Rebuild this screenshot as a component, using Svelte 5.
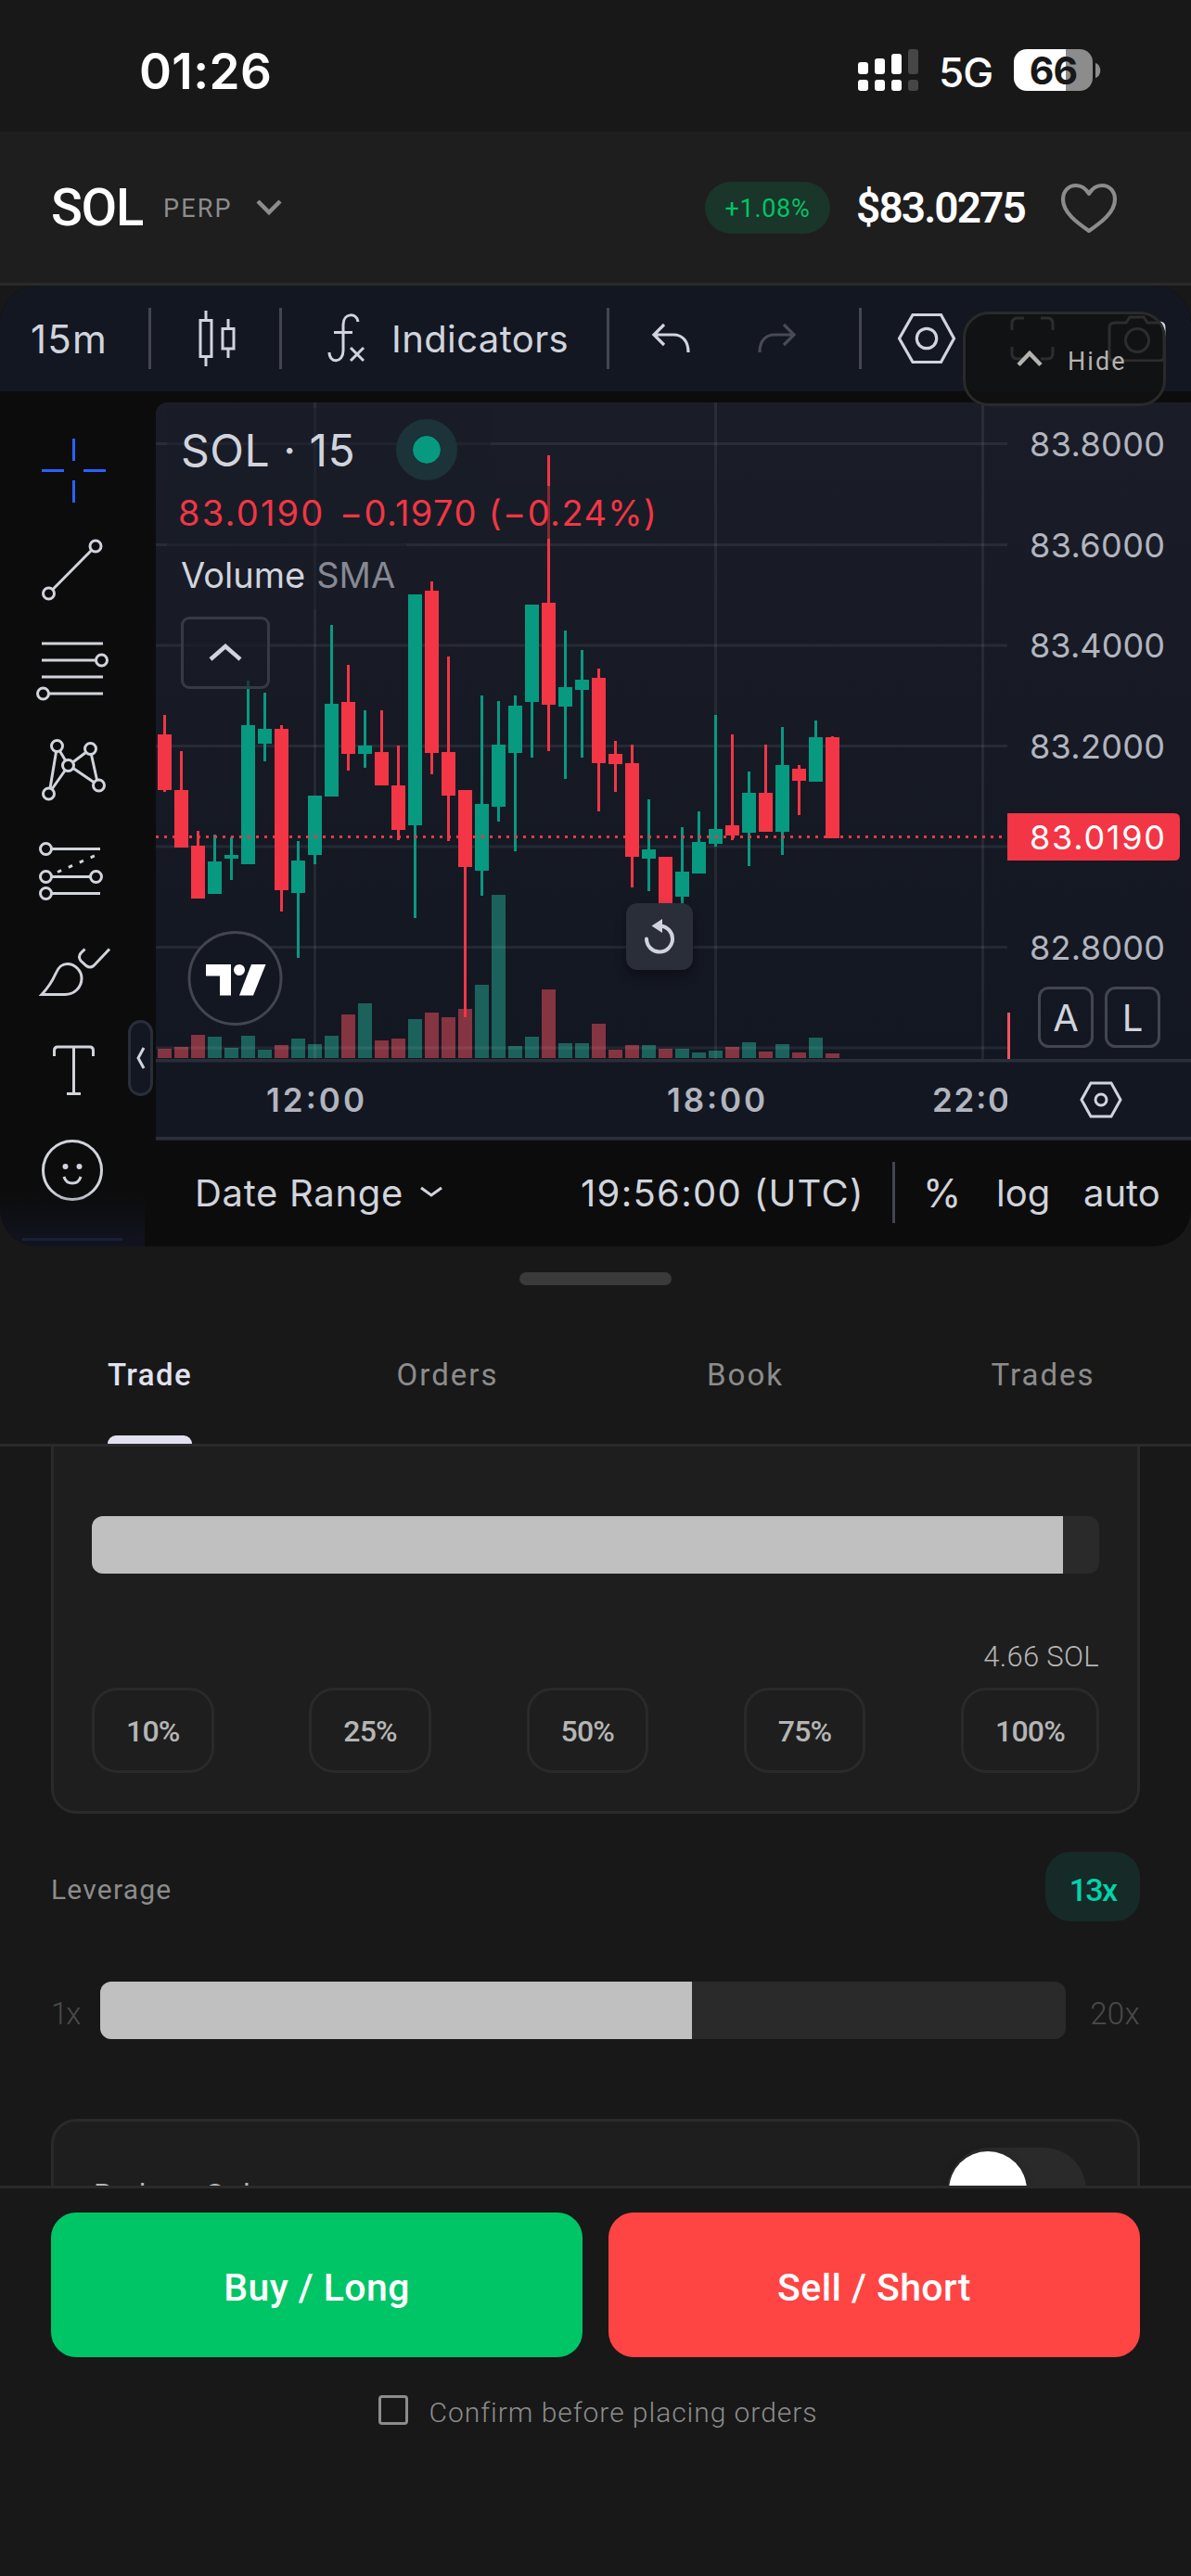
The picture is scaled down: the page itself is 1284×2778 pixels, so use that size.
<script>
  // Candle: [up, wick top, body top, body bottom, wick bottom, volume top]
  const candles = [
    [0, 771, 792, 852, 854, 1131],
    [0, 810, 852, 914, 914, 1129],
    [0, 896, 912, 969, 969, 1116],
    [1, 900, 929, 964, 964, 1118],
    [1, 903, 922, 926, 949, 1130],
    [1, 734, 782, 932, 932, 1117],
    [1, 747, 786, 802, 821, 1132],
    [0, 782, 786, 960, 983, 1127],
    [1, 907, 928, 963, 1033, 1120],
    [1, 858, 858, 922, 932, 1126],
    [1, 674, 759, 859, 859, 1117],
    [0, 717, 757, 813, 831, 1094],
    [1, 766, 804, 813, 828, 1082],
    [0, 766, 811, 847, 847, 1122],
    [0, 804, 847, 895, 906, 1120],
    [1, 641, 641, 890, 990, 1099],
    [0, 627, 637, 812, 835, 1092],
    [0, 708, 811, 858, 907, 1097],
    [0, 852, 852, 935, 1097, 1088],
    [1, 750, 867, 939, 966, 1062],
    [1, 756, 803, 870, 886, 965],
    [1, 750, 761, 812, 918, 1128],
    [1, 652, 652, 757, 817, 1118],
    [0, 491, 650, 760, 810, 1067],
    [1, 680, 741, 762, 840, 1125],
    [1, 701, 733, 744, 817, 1125],
    [0, 721, 731, 823, 875, 1104],
    [0, 799, 813, 824, 854, 1132],
    [0, 803, 823, 924, 957, 1127],
    [1, 862, 916, 926, 961, 1127],
    [0, 924, 924, 985, 985, 1131],
    [1, 892, 940, 967, 985, 1131],
    [1, 875, 908, 942, 942, 1135],
    [1, 771, 894, 910, 913, 1133],
    [0, 792, 890, 901, 906, 1129],
    [1, 832, 855, 898, 934, 1124],
    [0, 803, 855, 897, 897, 1134],
    [1, 784, 825, 897, 922, 1126],
    [0, 825, 829, 842, 879, 1135],
    [1, 777, 795, 843, 843, 1119],
    [0, 794, 795, 904, 904, 1136]
  ].map(([up, high, top, bottom, low, vol], i) => ({
    x: 170 + i * 18,
    color: up ? '#089981' : '#f23645',
    volColor: up ? '#1c625c' : '#853441',
    high, top, bottom, low, vol
  }));

  const gridRows = [478.5, 587.5, 696, 804.5, 913, 1021.5, 1130];
  const gridCols = [339.5, 771.5, 1059.5];

  const priceLabels = [
    { text: '83.8000', y: 478.5 },
    { text: '83.6000', y: 587.5 },
    { text: '83.4000', y: 696 },
    { text: '83.2000', y: 804.5 },
    { text: '82.8000', y: 1021.5 }
  ];

  const tabs = ['Trade', 'Orders', 'Book', 'Trades'];
  const percents = ['10%', '25%', '50%', '75%', '100%'];

  let activeTab = 'Trade';
  let sizeFill = 96.4;
  let leverage = 13;
  let leverageFill = 61.3;
  let confirmOrders = false;
</script>

<div class="screen">
  <div class="status-bar">
    <span class="time">01:26</span>
    <div class="status-right">
      <svg class="signal" width="65" height="45" viewBox="0 0 65 45">
        <g fill="#fff">
          <rect x="0" y="14" width="11" height="13" rx="3" />
          <rect x="18" y="10" width="11" height="17" rx="3" />
          <rect x="36" y="5" width="11" height="22" rx="3" />
          <rect x="0" y="33" width="11" height="12" rx="3" />
          <rect x="18" y="33" width="11" height="12" rx="3" />
          <rect x="36" y="33" width="11" height="12" rx="3" />
        </g>
        <rect x="54" y="0" width="11" height="27" rx="3" fill="#464646" />
        <rect x="54" y="33" width="11" height="12" rx="3" fill="#464646" />
      </svg>
      <span class="network">5G</span>
      <div class="battery">66</div>
      <svg width="6" height="16" viewBox="0 0 6 16"><path d="M0 0C7 2 7 14 0 16z" fill="#8c8c8c" /></svg>
    </div>
  </div>

  <header class="market">
    <span class="symbol">SOL</span>
    <span class="kind">PERP</span>
    <svg class="market-chevron" width="30" height="20" viewBox="0 0 30 20">
      <path d="M3 3l12 12 12-12" fill="none" stroke="#8c8c8c" stroke-width="4.5" />
    </svg>
    <span class="change">+1.08%</span>
    <span class="price">$83.0275</span>
    <svg class="heart" width="62" height="56" viewBox="0 0 62 56">
      <path
        d="M31 53C18 44 3 33 3 19C3 10 9 4 17 4C24 4 28 8 31 13C34 8 38 4 45 4C53 4 59 10 59 19C59 33 44 44 31 53z"
        fill="none" stroke="#8c8c8c" stroke-width="4.2" stroke-linejoin="round"
      />
    </svg>
  </header>

  <section class="widget">
    <div class="toolbar">
      <span class="interval">15m</span>
      <span class="sep"></span>
      <svg class="icon-candles" width="42" height="62" viewBox="0 0 42 62" fill="none" stroke="#d1d4dc" stroke-width="3">
        <path d="M3 11.5h12v39H3zM9 1v10M9 51v10M27 20.500h12v21.500H27zM33 10v10M33 42v10" />
      </svg>
      <span class="sep"></span>
      <svg class="icon-fx" width="42" height="54" viewBox="0 0 42 54" fill="none" stroke="#d1d4dc" stroke-width="3">
        <path d="M33 9C32 -1 17 -1 17 12V40C17 54 2 54 2 42M7 20.500h20M25 37l14 14M39 37L25 51" />
      </svg>
      <span class="indicators">Indicators</span>
      <span class="sep"></span>
      <svg class="icon-undo" width="42" height="34" viewBox="0 0 42 34" fill="none" stroke="#d1d4dc" stroke-width="3.200">
        <path d="M14 2L3 13l11 11M3 13H24C34 13 40 20 40 32" />
      </svg>
      <svg class="icon-redo" width="42" height="34" viewBox="0 0 42 34" fill="none" stroke="#484a55" stroke-width="3.200">
        <path d="M28 2l11 11-11 11M39 13H18C8 13 2 20 2 32" />
      </svg>
      <span class="sep"></span>
      <svg class="icon-gear" width="64" height="56" viewBox="0 0 64 56" fill="none" stroke="#d1d4dc" stroke-width="3.200">
        <path d="M2.500 28L17 2.500H47.500L61.500 28L47.500 53.500H17z" />
        <circle cx="32" cy="28" r="10.700" />
      </svg>
      <svg class="icon-full" width="48" height="48" viewBox="0 0 48 48" fill="none" stroke="#d1d4dc" stroke-width="3">
        <path d="M2 15V8Q2 2 8 2h7M33 2h7q6 0 6 6v7M46 33v7q0 6-6 6h-7M15 46H8q-6 0-6-6v-7" />
      </svg>
      <svg class="icon-camera" width="64" height="50" viewBox="0 0 64 50" fill="none" stroke="#d1d4dc" stroke-width="3">
        <path d="M8 8H20L24 2H39L43 8H56Q61 8 61 13V44Q61 49 56 49H7Q2 49 2 44V13Q2 8 8 8z" />
        <circle cx="32" cy="27" r="12.500" />
      </svg>
    </div>

    <button class="hide" type="button">
      <svg width="28" height="18" viewBox="0 0 28 18"><path d="M2 15.500L14 3l12 12.500" fill="none" stroke="#b5b3b0" stroke-width="4.500" /></svg>
      <span>Hide</span>
    </button>

    <div class="workspace">
      <aside class="tools">
        <svg viewBox="0 0 168 108" class="active">
          <path d="M79.500 19v24M79.500 64v24M45 53.500h24M90 53.500h24" />
        </svg>
        <svg viewBox="0 0 168 108">
          <circle cx="103" cy="27" r="6" /><circle cx="52.500" cy="78" r="6" />
          <path d="M57 73.500L98.500 31.500" />
        </svg>
        <svg viewBox="0 0 168 108">
          <path d="M45 24h66M45 42h58M45 60h66M52.500 78H111" />
          <circle cx="109.500" cy="42" r="6" /><circle cx="46.500" cy="78" r="6" />
        </svg>
        <svg viewBox="0 0 168 108">
          <circle cx="61.500" cy="26.500" r="6" /><circle cx="97.500" cy="29.500" r="6" />
          <circle cx="73.500" cy="47.500" r="6" /><circle cx="52.500" cy="78" r="6" />
          <circle cx="106.500" cy="69" r="6" />
          <path d="M60.500 33L54 72M64.500 32l6 10M56 73l14-20M78.500 44l14-10.500M79 50.500l22 15M98.500 36l6 27" />
        </svg>
        <svg viewBox="0 0 168 108">
          <circle cx="49.500" cy="29.500" r="6" /><circle cx="49.500" cy="59.500" r="6" />
          <circle cx="103.500" cy="59.500" r="6" /><circle cx="49.500" cy="77.500" r="6" />
          <path d="M56 29.500h52M56 59.500h41M56 77.500h52" />
          <path d="M62 54.500L104 36" stroke-dasharray="4.500 8.500" />
        </svg>
        <svg viewBox="0 0 168 108">
          <path d="M45 78.500C51 72 56 65 60 56C64 47 68 45.500 72.500 45.500C81 45.500 88 53 88 61C88 71 80 78.500 70 78.500z" />
          <path d="M91.500 29.500L87 34Q84 38 87 42L93 47.500Q97 50.500 101 47.500L118 29.500" />
        </svg>
        <svg viewBox="0 0 168 108">
          <path d="M58.500 37V31Q58.500 27 62 27H97Q100.500 27 100.500 31V37M79.500 27V77.500M72 77.500h15" />
        </svg>
        <svg viewBox="0 0 168 108">
          <circle cx="78" cy="52" r="31.500" />
          <circle cx="70.500" cy="48" r="3" class="solid" /><circle cx="85.500" cy="48" r="3" class="solid" />
          <path d="M69 59Q71 66 78 66Q85 66 87 59" />
        </svg>
        <div class="tools-fade"></div>
        <button class="collapse" type="button" aria-label="Collapse">
          <svg width="10" height="24" viewBox="0 0 10 24"><path d="M8 1L2 12l6 11" fill="none" stroke="#d1d4dc" stroke-width="3" /></svg>
        </button>
      </aside>

      <div class="chart">
        <svg class="plot" width="1116" height="796" viewBox="168 434 1116 796">
          <defs>
            <linearGradient id="pane" x1="0" y1="0" x2="0" y2="1">
              <stop offset="0" stop-color="#1a1d28" />
              <stop offset="1" stop-color="#131722" />
            </linearGradient>
            <clipPath id="time-clip"><rect x="168" y="1146" width="918" height="80" /></clipPath>
          </defs>
          <rect x="168" y="434" width="1116" height="708" fill="url(#pane)" />
          <rect x="168" y="1142" width="1116" height="88" fill="#131722" />

          {#each candles as c}
            <rect x={c.x} y={c.vol} width="15" height={1141 - c.vol} fill={c.volColor} />
          {/each}
          <g fill="#f0f3fa" fill-opacity="0.075">
            {#each gridRows as y}
              <rect x="168" y={y - 1.5} width="918" height="3" />
            {/each}
            {#each gridCols as x}
              <rect x={x - 1.5} y="434" width="3" height="708" />
            {/each}
          </g>
          {#each candles as c}
            <rect x={c.x + 6} y={c.high} width="3" height={c.low - c.high} fill={c.color} />
            <rect x={c.x} y={c.top} width="15" height={c.bottom - c.top} fill={c.color} />
          {/each}

          <path d="M168 902.500H1086" stroke="#f23645" stroke-width="3" stroke-dasharray="3 6" />
          <rect x="1086" y="1092" width="3" height="50" fill="#f7525f" />

          <g font-size="36" fill="#b2b5be">
            {#each priceLabels as label}
              <text x="1110" y={label.y + 13} textLength="146">{label.text}</text>
            {/each}
          </g>
          <path d="M1086 877H1266Q1272 877 1272 883V922Q1272 928 1266 928H1086z" fill="#f23645" />
          <text x="1110" y="916" font-size="36" fill="#fff" textLength="146">83.0190</text>

          <g fill="none" stroke="#434651" stroke-width="3">
            <rect x="1120.500" y="1065.500" width="57" height="63" rx="10" />
            <rect x="1192.500" y="1065.500" width="57" height="63" rx="10" />
          </g>
          <g font-size="40" fill="#d1d4dc" text-anchor="middle">
            <text x="1149" y="1112">A</text>
            <text x="1221" y="1112">L</text>
          </g>

          <rect x="168" y="1142" width="1116" height="3.500" fill="#2a2e39" />
          <g font-size="35" font-weight="600" fill="#b2b5be" clip-path="url(#time-clip)">
            <text x="287" y="1199" textLength="106">12:00</text>
            <text x="719" y="1199" textLength="106">18:00</text>
            <text x="1005" y="1199" textLength="108">22:00</text>
          </g>
          <g fill="none" stroke="#d1d4dc" stroke-width="3">
            <path d="M1166 1186L1176 1168H1198L1208 1186L1198 1204H1176z" />
            <circle cx="1187" cy="1186" r="6" />
          </g>
          <rect x="168" y="1226" width="1116" height="3.500" fill="#2a2e39" />

          <circle cx="253.500" cy="1055" r="49.500" fill="#131722" stroke="#434651" stroke-width="3" />
          <g fill="#fff">
            <path d="M222 1040h27v33.500H237V1052.500H222z" />
            <circle cx="258" cy="1046" r="6" />
            <path d="M271 1040h15.500L273 1073.500H258z" />
          </g>
        </svg>

        <div class="legend">
          <div class="legend-title">
            <span>SOL · 15</span>
            <i class="live"></i>
          </div>
          <div class="legend-values"><span class="last">83.0190</span><span class="diff">−0.1970 (−0.24%)</span></div>
          <div class="legend-study"><span>Volume</span> <span class="muted">SMA</span></div>
          <button class="legend-toggle" type="button" aria-label="Toggle legend">
            <svg width="38" height="20" viewBox="0 0 38 20"><path d="M3 17L19 3l16 14" fill="none" stroke="#d1d4dc" stroke-width="4.500" /></svg>
          </button>
        </div>

        <button class="reset" type="button" aria-label="Reset chart">
          <svg width="40" height="44" viewBox="0 0 40 44">
            <path d="M6 24.500A14 14 0 1 0 21 10.500" fill="none" stroke="#d1d4dc" stroke-width="4" stroke-linecap="round" />
            <path d="M23 3v15L11.500 10.500z" fill="#d1d4dc" />
          </svg>
        </button>

        <div class="chart-footer">
          <span class="range">Date Range</span>
          <svg width="26" height="14" viewBox="0 0 26 14"><path d="M2 2l11 8 11-8" fill="none" stroke="#d1d4dc" stroke-width="3" /></svg>
          <span class="clock">19:56:00 (UTC)</span>
          <span class="sep"></span>
          <span class="opt-percent">%</span>
          <span class="opt-log">log</span>
          <span class="opt-auto">auto</span>
        </div>
      </div>
    </div>
  </section>

  <div class="handle"></div>

  <nav class="tabs">
    {#each tabs as tab}
      <button type="button" class:active={activeTab === tab} on:click={() => (activeTab = tab)}>
        <span>{tab}</span>
      </button>
    {/each}
  </nav>

  <main class="form">
    <div class="card size-card">
      <div class="slider"><div class="fill" style="width: {sizeFill}%"></div></div>
      <div class="size">4.66 SOL</div>
      <div class="percents">
        {#each percents as p}
          <button type="button">{p}</button>
        {/each}
      </div>
    </div>

    <div class="leverage-head">
      <span>Leverage</span>
      <span class="badge">{leverage}x</span>
    </div>
    <div class="leverage-row">
      <span class="min">1x</span>
      <div class="slider"><div class="fill" style="width: {leverageFill}%"></div></div>
      <span class="max">20x</span>
    </div>

    <div class="card option-card">
      <span>Reduce Only</span>
      <div class="switch"><div class="knob"></div></div>
    </div>
  </main>

  <footer class="actions">
    <div class="action-buttons">
      <button type="button" class="buy">Buy / Long</button>
      <button type="button" class="sell">Sell / Short</button>
    </div>
    <div class="confirm">
      <span class="checkbox" class:checked={confirmOrders}></span>
      <span>Confirm before placing orders</span>
    </div>
  </footer>
</div>

<style>
  :global(body) {
    background: #181818;
  }

  .screen {
    width: 1284px;
    height: 2778px;
    overflow: hidden;
    display: flex;
    flex-direction: column;
    background: #181818;
    color: #fff;
    font-family: Roboto, sans-serif;
  }

  .screen > * {
    flex-shrink: 0;
    box-sizing: border-box;
  }

  button {
    margin: 0;
    padding: 0;
    border: none;
    background: none;
    color: inherit;
    font: inherit;
    box-sizing: border-box;
  }

  svg {
    display: block;
    flex-shrink: 0;
  }

  /* status bar */
  .status-bar {
    height: 142px;
    padding: 0 97px 0 150px;
    display: flex;
    justify-content: space-between;
    align-items: center;
    font-family: Inter, sans-serif;
  }

  .time {
    font-size: 53px;
    font-weight: 600;
    letter-spacing: 0.4px;
    margin-top: 12px;
  }

  .status-right {
    display: flex;
    align-items: center;
    margin-top: 9px;
  }

  .network {
    font-size: 44px;
    font-weight: 500;
    margin-left: 22px;
    width: 81px;
    letter-spacing: -1px;
    padding-top: 4px;
  }

  .battery {
    width: 85px;
    height: 45px;
    line-height: 46px;
    border-radius: 14px;
    background: linear-gradient(to right, #fff 66%, #8c8c8c 66%);
    color: #181818;
    font-size: 41px;
    font-weight: 700;
    letter-spacing: -1px;
    text-align: center;
    margin-right: 3px;
  }

  /* market header */
  .market {
    height: 166px;
    padding: 0 79px 0 55px;
    display: flex;
    align-items: center;
    background: #1e1e1e;
    border-bottom: 3px solid #2a2a2a;
  }

  .symbol {
    font-size: 56px;
    font-weight: 500;
    letter-spacing: -1.3px;
    width: 121px;
  }

  .kind {
    font-size: 27px;
    color: #8c8c8c;
    letter-spacing: 2.2px;
    margin-top: 3px;
    width: 99px;
  }

  .change {
    margin-left: auto;
    width: 135px;
    height: 56px;
    line-height: 59px;
    border-radius: 28px;
    text-align: center;
    background: #1a3529;
    color: #00c566;
    font-size: 27px;
    letter-spacing: 0.7px;
  }

  .price {
    margin-left: 28px;
    width: 220px;
    font-size: 46px;
    font-weight: 600;
    letter-spacing: -1.9px;
  }

  /* chart widget */
  .widget {
    position: relative;
    height: 1036px;
    border-radius: 40px;
    overflow: hidden;
    background: #0c0c0c;
    font-family: Inter, sans-serif;
    color: #d1d4dc;
  }

  .toolbar {
    height: 114px;
    display: flex;
    align-items: center;
    background: #131722;
    font-size: 40px;
  }

  .sep {
    width: 3px;
    height: 66px;
    background: #434651;
    flex-shrink: 0;
  }

  .interval {
    width: 127px;
    padding-left: 33px;
    font-size: 42px;
    letter-spacing: 1.2px;
  }

  .icon-candles {
    margin: 0 46px 0 50px;
  }

  .icon-fx {
    margin: 0 27px 0 49px;
  }

  .indicators {
    width: 232px;
    white-space: nowrap;
    letter-spacing: 0.4px;
  }

  .icon-undo {
    margin: 0 73px 0 45px;
  }

  .icon-redo {
    margin-right: 67px;
  }

  .icon-gear {
    margin: 0 58px 0 38px;
  }

  .icon-camera {
    margin-left: 57px;
    margin-top: -1px;
  }

  .hide {
    position: absolute;
    top: 28px;
    left: 1038px;
    width: 219px;
    height: 102px;
    padding: 0 0 0 55px;
    display: flex;
    align-items: center;
    gap: 27px;
    border: 3px solid #2a2a2a;
    border-radius: 28px;
    background: rgba(17, 17, 17, 0.86);
    color: #b5b3b0;
    font-family: Roboto, sans-serif;
    font-size: 27px;
    letter-spacing: 2.1px;
    z-index: 2;
  }

  .hide span {
    padding-top: 6px;
  }

  .workspace {
    display: flex;
    height: 922px;
  }

  .tools {
    position: relative;
    width: 168px;
    padding-top: 32px;
    box-sizing: border-box;
    flex-shrink: 0;
  }

  .tools > svg {
    width: 168px;
    height: 108px;
    fill: none;
    stroke: #d1d4dc;
    stroke-width: 3;
  }

  .tools > svg.active {
    stroke: #2962ff;
  }

  .tools .solid {
    fill: #d1d4dc;
    stroke: none;
  }

  .tools-fade {
    position: absolute;
    left: 0;
    bottom: 0;
    width: 156px;
    height: 60px;
    background:
      linear-gradient(#1b2036, #1b2036) 24px 51px / 108px 3px no-repeat,
      linear-gradient(to bottom, rgba(19, 23, 34, 0), #111420);
  }

  .collapse {
    position: absolute;
    left: 138px;
    top: 678px;
    width: 27px;
    height: 82px;
    display: flex;
    align-items: center;
    justify-content: center;
    border: 3px solid #2a2e39;
    border-radius: 14px;
    background: #131722;
  }

  .chart {
    position: relative;
    width: 1116px;
    padding-top: 12px;
  }

  .plot {
    border-top-left-radius: 12px;
  }

  .legend {
    position: absolute;
    left: 12px;
    top: 18px;
    display: flex;
    flex-direction: column;
    align-items: flex-start;
    white-space: nowrap;
  }

  .legend-title,
  .legend-values,
  .legend-study {
    display: flex;
    align-items: center;
    box-sizing: border-box;
    background: rgba(24, 27, 38, 0.5);
  }

  .legend-title {
    width: 349px;
    height: 84px;
    padding: 6px 0 0 15px;
    font-size: 48px;
    letter-spacing: 0.5px;
  }

  .legend-title span {
    width: 232px;
  }

  .live {
    width: 30px;
    height: 30px;
    border-radius: 50%;
    background: #089981;
    border: 18px solid #1b3339;
    background-clip: padding-box;
  }

  .legend-values {
    height: 57px;
    padding: 0 12px;
    font-size: 38px;
    color: #f23645;
  }

  .last {
    width: 174px;
    letter-spacing: 2.2px;
  }

  .diff {
    letter-spacing: 1.4px;
  }

  .legend-study {
    width: 258px;
    height: 76px;
    padding: 2px 0 0 15px;
    font-size: 38px;
    gap: 12px;
  }

  .muted {
    color: #868993;
  }

  .legend-toggle {
    width: 96px;
    height: 78px;
    margin: 8px 0 0 15px;
    display: flex;
    align-items: center;
    justify-content: center;
    border: 3px solid #363a45;
    border-radius: 9px;
    background: rgba(24, 27, 38, 0.7);
  }

  .reset {
    position: absolute;
    left: 507px;
    top: 552px;
    width: 72px;
    height: 72px;
    display: flex;
    align-items: center;
    justify-content: center;
    border-radius: 12px;
    background: #2a2e39;
    box-shadow: 0 6px 12px rgba(0, 0, 0, 0.4);
  }

  .chart-footer {
    height: 112px;
    display: flex;
    align-items: center;
    padding-left: 42px;
    font-size: 40px;
    white-space: nowrap;
  }

  .range {
    width: 242px;
    letter-spacing: 0.7px;
  }

  .clock {
    margin-left: 148px;
    width: 336px;
    letter-spacing: 1.3px;
  }

  .opt-percent {
    margin-left: 30px;
    width: 79px;
    font-size: 42px;
  }

  .opt-log {
    width: 94px;
  }

  /* bottom sheet */
  .handle {
    width: 164px;
    height: 14px;
    margin: 28px auto 0;
    border-radius: 7px;
    background: #3a3a3a;
  }

  .tabs {
    height: 174px;
    display: grid;
    grid-template-columns: repeat(4, 1fr);
    border-bottom: 3px solid #2a2a2a;
  }

  .tabs button {
    display: flex;
    justify-content: center;
    font-size: 33px;
    letter-spacing: 2px;
    color: #8c8c8c;
  }

  .tabs span {
    height: 171px;
    padding: 77px 0 0 2px;
    display: flex;
    flex-direction: column;
    justify-content: space-between;
    box-sizing: border-box;
  }

  .tabs span::after {
    content: '';
    height: 9px;
  }

  .tabs .active {
    color: #e1e1f0;
    font-weight: 500;
    letter-spacing: 1.4px;
  }

  .tabs .active span::after {
    background: #e1e1f0;
    border-radius: 9px 9px 0 0;
  }

  .form {
    height: 797px;
    padding: 0 55px;
    overflow: hidden;
  }

  .card {
    box-sizing: border-box;
    border: 3px solid #2a2a2a;
    border-radius: 27px;
    background: #1e1e1e;
  }

  .size-card {
    height: 396px;
    padding: 75px 41px 0;
    border-top: none;
    border-radius: 0 0 27px 27px;
  }

  .slider {
    height: 62px;
    border-radius: 12px;
    overflow: hidden;
    background: #2a2a2a;
  }

  .fill {
    height: 100%;
    background: #c0c0c0;
  }

  .size {
    margin-top: 70px;
    height: 53px;
    line-height: 40px;
    text-align: right;
    font-size: 31px;
    font-weight: 300;
    color: #b5b5b5;
    letter-spacing: 0.3px;
  }

  .percents {
    display: flex;
    justify-content: space-between;
  }

  .percents button {
    height: 92px;
    padding: 2px 34px 0;
    border: 3px solid #2a2a2a;
    border-radius: 27px;
    font-size: 32px;
    font-weight: 500;
    color: #b5b5b5;
    letter-spacing: -0.8px;
  }

  .leverage-head {
    margin-top: 41px;
    height: 75px;
    display: flex;
    align-items: center;
    justify-content: space-between;
    font-size: 30px;
    color: #8c8c8c;
    letter-spacing: 1.2px;
  }

  .leverage-head span:first-child {
    padding-top: 5px;
  }

  .badge {
    width: 102px;
    height: 75px;
    line-height: 82px;
    border-radius: 27px;
    background: #162a28;
    color: #00d4aa;
    text-align: center;
    font-size: 34px;
    font-weight: 500;
    letter-spacing: -1.7px;
  }

  .leverage-row {
    margin-top: 65px;
    height: 62px;
    display: flex;
    align-items: center;
    font-size: 33px;
    font-weight: 300;
    color: #4a4a4a;
  }

  .leverage-row span {
    padding-top: 6px;
  }

  .leverage-row .slider {
    width: 1041px;
  }

  .min {
    width: 53px;
    letter-spacing: -2px;
  }

  .max {
    margin-left: auto;
    letter-spacing: 0.4px;
  }

  .option-card {
    margin-top: 86px;
    height: 160px;
    padding: 28px 55px 0 43px;
    display: flex;
    align-items: flex-start;
    justify-content: space-between;
    font-size: 32px;
    letter-spacing: 0.8px;
    color: #b5b5b5;
  }

  .option-card span {
    padding-top: 31px;
  }

  .switch {
    width: 150px;
    height: 92px;
    padding: 4px 2px;
    border-radius: 46px;
    background: #2a2a2a;
    box-sizing: border-box;
  }

  .knob {
    width: 84px;
    height: 84px;
    border-radius: 50%;
    background: #fff;
    box-shadow: 0 3px 12px rgba(0, 0, 0, 0.2);
  }

  .actions {
    flex: 1;
    padding: 26px 55px 0;
    border-top: 3px solid #2a2a2a;
    background: #181818;
  }

  .action-buttons {
    display: grid;
    grid-template-columns: 1fr 1fr;
    gap: 28px;
  }

  .action-buttons button {
    height: 156px;
    padding-top: 6px;
    border-radius: 27px;
    font-size: 41px;
    font-weight: 500;
    letter-spacing: 0.4px;
  }

  .buy {
    background: #00c566;
  }

  .sell {
    background: #ff4444;
  }

  .confirm {
    margin-top: 38px;
    height: 42px;
    padding-left: 5px;
    display: flex;
    align-items: center;
    justify-content: center;
    gap: 23px;
    font-size: 30px;
    font-weight: 300;
    color: #8c8c8c;
    letter-spacing: 0.95px;
  }

  .checkbox {
    width: 32px;
    height: 32px;
    margin-bottom: 4px;
    box-sizing: border-box;
    border: 3px solid #8c8c8c;
    border-radius: 4px;
  }

  .checked {
    background: #8c8c8c;
  }
</style>
